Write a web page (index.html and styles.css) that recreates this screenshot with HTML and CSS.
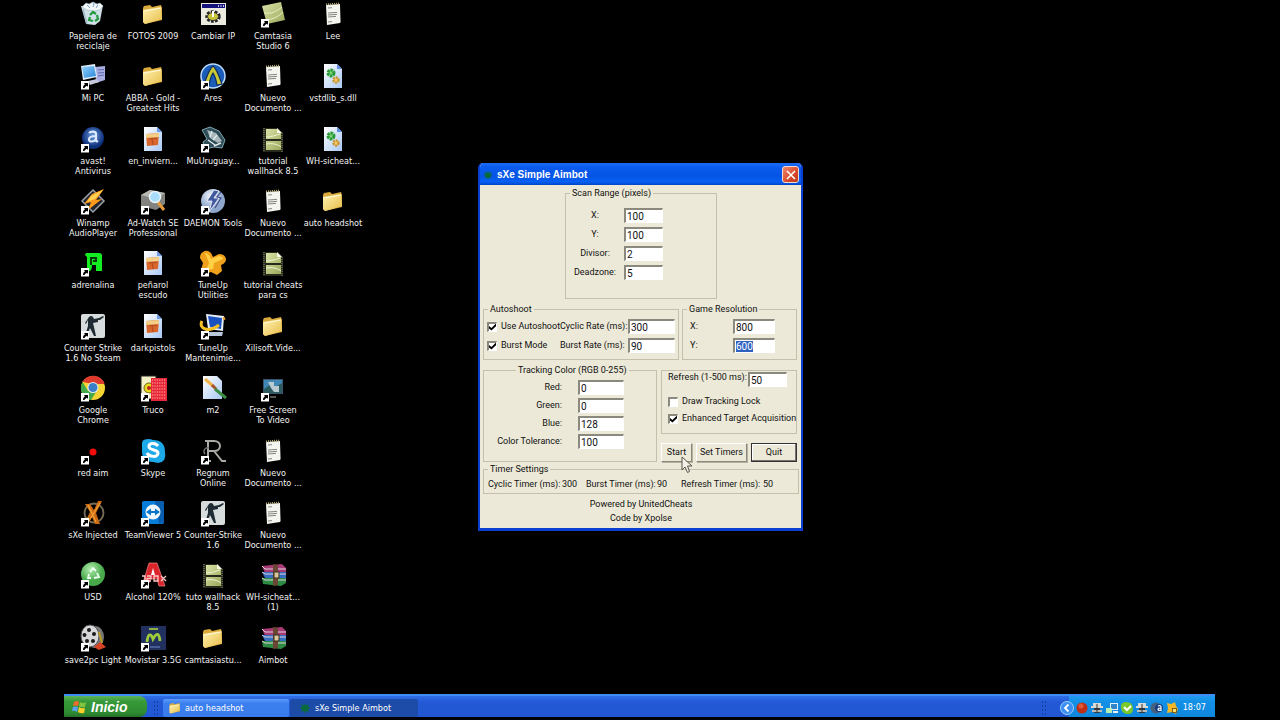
FILE: index.html
```
<!DOCTYPE html>
<html lang="es">
<head>
<meta charset="utf-8">
<title>Escritorio</title>
<link rel="stylesheet" href="styles.css">
</head>
<body>
<svg class="sprites" aria-hidden="true">
  <defs>
    <linearGradient id="g-folder" x1="0" y1="0" x2="1" y2="1"><stop offset="0" stop-color="#fff3b0"/><stop offset="1" stop-color="#e8bd4a"/></linearGradient>
    <linearGradient id="g-green" x1="0" y1="0" x2="1" y2="1"><stop offset="0" stop-color="#dbe3a8"/><stop offset="1" stop-color="#9aa75a"/></linearGradient>
    <linearGradient id="g-page" x1="0" y1="0" x2="1" y2="1"><stop offset="0" stop-color="#ffffff"/><stop offset="1" stop-color="#a9c8f5"/></linearGradient>
    <linearGradient id="g-screen" x1="0" y1="0" x2="1" y2="1"><stop offset="0" stop-color="#8fd3fb"/><stop offset="1" stop-color="#2a85d8"/></linearGradient>
    <radialGradient id="g-avast" cx=".5" cy=".4"><stop offset="0" stop-color="#6f9de0"/><stop offset="1" stop-color="#0c2e78"/></radialGradient>
    <radialGradient id="g-usd" cx=".4" cy=".3"><stop offset="0" stop-color="#b4edb0"/><stop offset="1" stop-color="#48a94a"/></radialGradient>
    <radialGradient id="g-disc" cx=".4" cy=".3"><stop offset="0" stop-color="#f4f8ff"/><stop offset="1" stop-color="#8ea6cc"/></radialGradient>
  </defs>
  <symbol id="arrow" viewBox="0 0 28 28"><rect x="2" y="19" width="8" height="8.500" fill="#fff"/><path d="M4 26c0-2 .6-3 2-3.600L5 21h4v4l-1-1.200C6.500 24.300 6 25 5.500 26z" fill="#000"/></symbol>
  <symbol id="bin" viewBox="0 0 28 28"><path d="M2 6l22-1-3 16-5 4-9-1z" fill="#cfe0e6"/><path d="M3 7l4-4 3 1 4-2 4 2 3-1 3 3-3 4-6 1-7-1z" fill="#f4fafa" stroke="#9fb6c4" stroke-width=".6"/><path d="M8 5l3 3M15 3l-1 4M19 5l-2 3" stroke="#7ba0d0" stroke-width="1"/><path d="M11 15l3-3 3 2M18 15l1 4-3 2M14 21l-4-1 1-3" fill="none" stroke="#1f9a3c" stroke-width="2.200"/><path d="M4 9l4 15" stroke="#8fb0c0"/></symbol>
  <symbol id="folder" viewBox="0 0 28 28"><path d="M4 8l1-2 6-1 2 2 9-2 1 3v12L6 24l-2-2z" fill="#d9a93c"/><path d="M4 10l18-3 1 12L6 24l-2-2z" fill="url(#g-folder)"/><path d="M5 11l17-3" stroke="#fffbd8"/></symbol>
  <symbol id="notes" viewBox="0 0 28 28"><path d="M7 5l14-1v19L8 25z" fill="#f5f5f0"/><path d="M21 5l1 17-1 1z" fill="#8b8b86"/><path d="M7 4.500L21 3.500" stroke="#b3a878" stroke-width="2" stroke-dasharray="1 1"/><path d="M9 8l4-.3M9 13l9-.6M9 15l9-.6M9 17l8-.6M9 22l4-.4" stroke="#777" stroke-width=".9"/></symbol>
  <symbol id="cog" viewBox="0 0 28 28"><rect x="2" y="3" width="25" height="22" fill="#ecebdf"/><rect x="3" y="4" width="23" height="4" fill="#14147c"/><path d="M19 6h1M21.500 6h1M24 6h1" stroke="#fff" stroke-width="1.500"/><ellipse cx="14" cy="16.500" rx="6" ry="4.500" fill="none" stroke="#222" stroke-width="3.500" stroke-dasharray="2.500 1.200"/><ellipse cx="14" cy="16.500" rx="5.500" ry="4" fill="#c9c53a" stroke="#333"/><path d="M14 11v6" stroke="#fff" stroke-width="2"/></symbol>
  <symbol id="cam" viewBox="0 0 28 28"><path d="M3 6l19-4 4 18-18 4z" fill="url(#g-green)"/><path d="M5 13c7 1 12-1 18-6M7 20c7-1 12-3 17-8" fill="none" stroke="#e9efc5"/></symbol>
  <symbol id="pc" viewBox="0 0 28 28"><path d="M16 5l10-1v14l-9 3z" fill="#a9aee0"/><path d="M19 8l6-.5M19 11l6-.5M19 14l6-1" stroke="#5f68b2"/><path d="M2 4l14-2 2 13-14 3z" fill="#e4eefb"/><path d="M3 5l12-1 2 10-12 2z" fill="url(#g-screen)"/><path d="M9 19l9-2 2 3-9 3z" fill="#c9c9de"/></symbol>
  <symbol id="ares" viewBox="0 0 28 28"><circle cx="14" cy="14" r="12" fill="#1b5cb8" stroke="#bcdcff" stroke-width="1.500"/><path d="M5 22C8 15 10 7 14 4c4 3 6 11 9 18l-5 1c-1-6-2-9-4-12-2 3-3 6-4 12z" fill="#c9c935" stroke="#112c5c" stroke-width="1.200"/></symbol>
  <symbol id="avast" viewBox="0 0 28 28"><circle cx="14" cy="13" r="11" fill="url(#g-avast)"/><path d="M10 8c2-2 7-2 7 1v6q0 2 2 1M17 11c-4 0-7 1-7 3.500s5 3 7-.5" fill="none" stroke="#dce9ff" stroke-width="2.200"/></symbol>
  <symbol id="pic" viewBox="0 0 28 28"><path d="M5 2h13l5 5v19H5z" fill="url(#g-page)"/><path d="M18 2v5h5z" fill="#6f9be6"/><path d="M7 9l13-1-1 12-11 1z" fill="#d9662b"/><path d="M7 9l13-1v4L7 13z" fill="#f2cf84"/><path d="M10 14l8-.5M13 13l1 7" stroke="#b34a22" stroke-width="1.200"/></symbol>
  <symbol id="mu" viewBox="0 0 28 28"><path d="M3 5l8-3 9 4 6 9-3 8-8-1-9 2-2-7 4-3z" fill="#2f4d57" stroke="#7ea5b1"/><path d="M8 5l9 3 6 8-4 2-8-5z" fill="#a9b7bb"/><path d="M9 15l7 5M13 6l-2 6M18 10l-4 5M22 18l-7 3" stroke="#dfeaec" stroke-width="1.400"/></symbol>
  <symbol id="film" viewBox="0 0 28 28"><path d="M4 3h15l5 5v19H4z" fill="#26291b"/><path d="M5 3v24M23 8v19" stroke="#8b916c" stroke-dasharray="1 1"/><path d="M7 4h11l4 4v6H7zM7 16h15v9H7z" fill="url(#g-green)"/><path d="M18 3v5h5z" fill="#f7f8ea"/><path d="M7 12c6 0 10-2 14-3M7 19c6-1 11 0 15 3" fill="none" stroke="#eef2ce"/></symbol>
  <symbol id="dll" viewBox="0 0 28 28"><path d="M5 2h13l5 5v19H5z" fill="url(#g-page)"/><path d="M18 2v5h5z" fill="#5f8fe0"/><circle cx="12" cy="11" r="3" fill="#7fd07b" stroke="#2a9a38" stroke-width="3" stroke-dasharray="2.500 .8"/><circle cx="17" cy="18" r="2.500" fill="#f6d06f" stroke="#c99432" stroke-width="2.500" stroke-dasharray="2 .8"/></symbol>
  <symbol id="winamp" viewBox="0 0 28 28"><path d="M14 3l11 11-11 11L3 14z" fill="#23262c" stroke="#9ba1ab" stroke-width="1.500"/><path d="M25 2l-12 5-8 10 7-2-3 8 14-11-6 1z" fill="#ff9a1a"/><path d="M24 3L12 9l-4 6 8-3z" fill="#ffd053"/></symbol>
  <symbol id="adwatch" viewBox="0 0 28 28"><path d="M2 8l9-5 15 3v11l-9 6-15-4z" fill="#82827e"/><path d="M2 8l9-5 15 3-9 6z" fill="#b8b8b2"/><path d="M18 14l7 9" stroke="#e29a3d" stroke-width="3"/><circle cx="16" cy="10" r="5.500" fill="#a8ddfa" stroke="#e8f3fa" stroke-width="1.500"/></symbol>
  <symbol id="daemon" viewBox="0 0 28 28"><circle cx="14" cy="14" r="12" fill="url(#g-disc)"/><path d="M15 3l-7 11h5l-3 11 10-14h-5l5-7z" fill="#415a9d" stroke="#f5f8ff" stroke-width=".8"/><path d="M22 5l-4 5 4 1-6 10" fill="none" stroke="#3a4c86" stroke-width="1.200"/></symbol>
  <symbol id="adren" viewBox="0 0 28 28"><path d="M6 6q0-2 2-2h12q3 0 3 3v15h-6v-6h-4q0 6-3 6H5q3-1 3-4V8z" fill="#12ee22"/><path d="M12 16V9h5v3h-3" fill="none" stroke="#043b09" stroke-width="2"/></symbol>
  <symbol id="tune" viewBox="0 0 28 28"><path d="M4 3q4-3 8 1l2 4 6-3q6 0 7 5 0 4-5 6l1 6-5 4-6-3-6 2-4-4 2-7-3-5q0-5 3-6z" fill="#f0a11c"/><path d="M6 4q4 0 6 6l8-3q4 1 4 3l-9 4-1 6-7 1 3-7z" fill="#ffd043"/></symbol>
  <symbol id="cs" viewBox="0 0 28 28"><rect x="2" y="2" width="24" height="24" rx="2" fill="#d7dcdc"/><path d="M10 5q2-2 4 0l1 2 5-1 4-2 1 1-4 3h-2v2l-5 1 1 4 2 9h-2l-4-8-3 8H6l3-10V8l-2 4-1-1z" fill="#202c33"/></symbol>
  <symbol id="maint" viewBox="0 0 28 28"><path d="M7 2l18 2-1 15-15-2z" fill="#e7eef8"/><path d="M9 4l14 2-1 11-11-2z" fill="#1951c0"/><path d="M10 20l14 0-1 4-14 0z" fill="#b9c7da"/><path d="M3 9c-4 8 7 12 17 4" fill="none" stroke="#f4c126" stroke-width="3"/><path d="M24 7l2-1" stroke="#f4a126" stroke-width="3"/></symbol>
  <symbol id="chrome" viewBox="0 0 28 28"><circle cx="14" cy="14" r="12" fill="#f5d534"/><path d="M3.600 8A12 12 0 0 1 25.500 10H14z" fill="#df3a2e"/><path d="M3.600 8A12 12 0 0 0 12 26l5-8-8-1z" fill="#43a94a"/><circle cx="14" cy="13.500" r="5.500" fill="#e9edf1"/><circle cx="14" cy="13.500" r="4.500" fill="#3b7fc9"/></symbol>
  <symbol id="truco" viewBox="0 0 28 28"><rect x="2" y="2" width="15" height="23" fill="#f2f0c4" stroke="#222"/><circle cx="10" cy="14" r="5" fill="#e7dc1c" stroke="#735f18"/><circle cx="10" cy="14" r="2" fill="#bf2222"/><rect x="12" y="4" width="16" height="23" fill="#e8283a"/><path d="M13 6h14M13 9h14M13 12h14M13 15h14M13 18h14M13 21h14M13 24h14" stroke="#ffb6a8" stroke-width="1.200" stroke-dasharray="1.200 1.200"/></symbol>
  <symbol id="m2" viewBox="0 0 28 28"><path d="M4 2h14l5 5v18H4z" fill="url(#g-page)"/><path d="M6 5l8 7" stroke="#f0b54c" stroke-width="3"/><path d="M13 11l4 4" stroke="#a3542b" stroke-width="3"/><path d="M16 15l11 9" stroke="#3c8c43" stroke-width="3"/></symbol>
  <symbol id="fsv" viewBox="0 0 28 28"><path d="M4 5h20v15H4z" fill="#3a556c"/><path d="M5 6h18v13H5z" fill="#4187b6"/><path d="M5 15l6-4 4 3 8-5v10H5z" fill="#2b5a5e"/><path d="M9 8h6v4h5v6h-5l-3-4z" fill="#b9cbd0"/><path d="M11 23h6" stroke="#555" stroke-width="2"/></symbol>
  <symbol id="dot" viewBox="0 0 28 28"><circle cx="14" cy="15" r="3.500" fill="#f20d0d"/></symbol>
  <symbol id="skype" viewBox="0 0 28 28"><path d="M3 8q-1-6 6-6 3 0 5 1 12 0 12 12 2 10-7 11l-5-1Q3 25 3 14z" fill="#1da8e8"/><path d="M19 9c-3-4-10-3-9 1 1 4 9 2 9 6 0 5-9 4-11 0" fill="none" stroke="#fff" stroke-width="3"/></symbol>
  <symbol id="regnum" viewBox="0 0 28 28"><path d="M9 4v20M6 24h6M6 4h9c8 0 8 10 0 10H9M15 14l8 10h4" fill="none" stroke="#a9a9a5" stroke-width="2"/><path d="M6 17c-3-4 1-7 4-6" fill="none" stroke="#777" stroke-width="1.300"/></symbol>
  <symbol id="sxe" viewBox="0 0 28 28"><circle cx="15" cy="14" r="9.500" fill="none" stroke="#766d59" stroke-width="1.800"/><path d="M6 5h5l4 6 4-9h4l-6 12 4 11h-5l-3-7-5 7H5l6-12z" fill="#c96a12"/><path d="M9 6l8 17M21 4l-11 18" stroke="#ef9f37" stroke-width="1.300"/></symbol>
  <symbol id="team" viewBox="0 0 28 28"><rect x="3" y="2" width="22" height="23" rx="2" fill="#087cda"/><path d="M16 2h7q2 0 2 2v19l-5 2z" fill="#075eae"/><circle cx="14" cy="13" r="7.500" fill="#eef7fd"/><path d="M7 13l5-3.500v2.500h4V9.500l5 3.500-5 3.500V14h-4v2.500z" fill="#0875ca"/></symbol>
  <symbol id="usd" viewBox="0 0 28 28"><circle cx="14" cy="13" r="12" fill="url(#g-usd)"/><path d="M11 11l3-4 3 3M18 12l2 4-5 1M12 17H9l1-4" fill="none" stroke="#edfff0" stroke-width="1.800"/></symbol>
  <symbol id="alcohol" viewBox="0 0 28 28"><path d="M10 2h8l8 23h-6l-2-7h-6l-4 7H3z" fill="#dc252a" stroke="#f18989" stroke-width=".7"/><path d="M14 7l2 7h-4z" fill="#fff"/><path d="M3 15h3v5M8 15h4v2.500H8V20h4M15 15h4v5h-4zM22 15l5 5M27 15l-5 5" fill="none" stroke="#ffcaca" stroke-width="1.300"/></symbol>
  <symbol id="rar" viewBox="0 0 28 28"><path d="M3 5l20-2 4 4v5H6z" fill="#a83a74"/><path d="M3 11h24v6H6z" fill="#356ec0"/><path d="M3 17h24v5l-5 3-18-2z" fill="#2c8a43"/><path d="M3 5l3 3h21M3 11l3 2h21M3 17l3 2h21" fill="none" stroke="#dfd3dc"/><path d="M14 3l5 1v20l-5 1z" fill="#6a4735"/><rect x="15" y="11" width="5" height="6" fill="#d8c89c" stroke="#3d2a1d"/></symbol>
  <symbol id="reel" viewBox="0 0 28 28"><ellipse cx="16" cy="13" rx="9" ry="11" fill="#77777a"/><ellipse cx="11" cy="12" rx="9" ry="11" fill="#d8d8da" stroke="#555"/><g fill="#1a1a1a"><circle cx="10" cy="6" r="2"/><circle cx="15" cy="10" r="2"/><circle cx="5.500" cy="11" r="2"/><circle cx="14" cy="17" r="2"/><circle cx="8" cy="17" r="2"/></g><path d="M20 8l3 11" stroke="#b99a27" stroke-width="2"/><path d="M15 23l6-5 6 5-7 3z" fill="#d94325"/></symbol>
  <symbol id="movi" viewBox="0 0 28 28"><rect x="2" y="2" width="25" height="24" fill="#22305f"/><path d="M10 5h9" stroke="#8fae49" stroke-width="2"/><path d="M8 18c1-9 4-9 6-3 4-7 6-6 7 2" fill="none" stroke="#9ccc3c" stroke-width="2.800"/><path d="M11 23h10" stroke="#6f86c9"/></symbol>
  <symbol id="spider" viewBox="0 0 12 12"><path d="M6 1l1 3 3-2-1 3 3 1-3 1 1 3-3-1-1 3-1-3-3 1 1-3-3-1 3-1-1-3 3 2z" fill="#0b6a3c"/><circle cx="6" cy="6" r="3" fill="#0b6a3c"/></symbol>
  <symbol id="flag" viewBox="0 0 16 16"><path d="M2 3q3-2 5 0L6 7Q4 6 1 7z" fill="#f06a2c"/><path d="M8 3q3 2 6 0l-1 5q-3 1-6-1z" fill="#83c340"/><path d="M1 8q3-1 5 0l-1 5q-2-2-5-1z" fill="#5aa2f2"/><path d="M7 8q3 2 6 1l-1 5q-3 1-6-1z" fill="#fbce2c"/></symbol>
  <symbol id="net" viewBox="0 0 14 14"><path d="M3 2h8v3H3zM1 5h12v2H1z" fill="#d9d9d5"/><path d="M4 7h6v5H4z" fill="#333a3f"/><path d="M2 10h10" stroke="#bcbcb4" stroke-width="2"/><path d="M7 3v8" stroke="#333"/></symbol>
</svg>

<main class="desktop">
  <ul class="icons">
    <li><a href="#"><svg><use href="#bin"/></svg><span>Papelera de<br>reciclaje</span></a></li>
    <li><a href="#"><svg><use href="#pc"/><use href="#arrow"/></svg><span>Mi PC</span></a></li>
    <li><a href="#"><svg><use href="#avast"/><use href="#arrow"/></svg><span>avast!<br>Antivirus</span></a></li>
    <li><a href="#"><svg><use href="#winamp"/><use href="#arrow"/></svg><span>Winamp<br>AudioPlayer</span></a></li>
    <li><a href="#"><svg><use href="#adren"/><use href="#arrow"/></svg><span>adrenalina</span></a></li>
    <li><a href="#"><svg><use href="#cs"/><use href="#arrow"/></svg><span>Counter Strike<br>1.6 No Steam</span></a></li>
    <li><a href="#"><svg><use href="#chrome"/><use href="#arrow"/></svg><span>Google<br>Chrome</span></a></li>
    <li><a href="#"><svg><use href="#dot"/><use href="#arrow"/></svg><span>red aim</span></a></li>
    <li><a href="#"><svg><use href="#sxe"/><use href="#arrow"/></svg><span>sXe Injected</span></a></li>
    <li><a href="#"><svg><use href="#usd"/><use href="#arrow"/></svg><span>USD</span></a></li>
    <li><a href="#"><svg><use href="#reel"/><use href="#arrow"/></svg><span>save2pc Light</span></a></li>

    <li><a href="#"><svg><use href="#folder"/></svg><span>FOTOS 2009</span></a></li>
    <li><a href="#"><svg><use href="#folder"/></svg><span>ABBA - Gold -<br>Greatest Hits</span></a></li>
    <li><a href="#"><svg><use href="#pic"/></svg><span>en_inviern...</span></a></li>
    <li><a href="#"><svg><use href="#adwatch"/><use href="#arrow"/></svg><span>Ad-Watch SE<br>Professional</span></a></li>
    <li><a href="#"><svg><use href="#pic"/></svg><span>peñarol<br>escudo</span></a></li>
    <li><a href="#"><svg><use href="#pic"/></svg><span>darkpistols</span></a></li>
    <li><a href="#"><svg><use href="#truco"/><use href="#arrow"/></svg><span>Truco</span></a></li>
    <li><a href="#"><svg><use href="#skype"/><use href="#arrow"/></svg><span>Skype</span></a></li>
    <li><a href="#"><svg><use href="#team"/><use href="#arrow"/></svg><span>TeamViewer 5</span></a></li>
    <li><a href="#"><svg><use href="#alcohol"/><use href="#arrow"/></svg><span>Alcohol 120%</span></a></li>
    <li><a href="#"><svg><use href="#movi"/><use href="#arrow"/></svg><span>Movistar 3.5G</span></a></li>

    <li><a href="#"><svg><use href="#cog"/></svg><span>Cambiar IP</span></a></li>
    <li><a href="#"><svg><use href="#ares"/><use href="#arrow"/></svg><span>Ares</span></a></li>
    <li><a href="#"><svg><use href="#mu"/><use href="#arrow"/></svg><span>MuUruguay...</span></a></li>
    <li><a href="#"><svg><use href="#daemon"/><use href="#arrow"/></svg><span>DAEMON Tools</span></a></li>
    <li><a href="#"><svg><use href="#tune"/><use href="#arrow"/></svg><span>TuneUp<br>Utilities</span></a></li>
    <li><a href="#"><svg><use href="#maint"/><use href="#arrow"/></svg><span>TuneUp<br>Mantenimie...</span></a></li>
    <li><a href="#"><svg><use href="#m2"/></svg><span>m2</span></a></li>
    <li><a href="#"><svg><use href="#regnum"/><use href="#arrow"/></svg><span>Regnum<br>Online</span></a></li>
    <li><a href="#"><svg><use href="#cs"/><use href="#arrow"/></svg><span>Counter-Strike<br>1.6</span></a></li>
    <li><a href="#"><svg><use href="#film"/></svg><span>tuto wallhack<br>8.5</span></a></li>
    <li><a href="#"><svg><use href="#folder"/></svg><span>camtasiastu...</span></a></li>

    <li><a href="#"><svg><use href="#cam"/><use href="#arrow"/></svg><span>Camtasia<br>Studio 6</span></a></li>
    <li><a href="#"><svg><use href="#notes"/></svg><span>Nuevo<br>Documento ...</span></a></li>
    <li><a href="#"><svg><use href="#film"/></svg><span>tutorial<br>wallhack 8.5</span></a></li>
    <li><a href="#"><svg><use href="#notes"/></svg><span>Nuevo<br>Documento ...</span></a></li>
    <li><a href="#"><svg><use href="#film"/></svg><span>tutorial cheats<br>para cs</span></a></li>
    <li><a href="#"><svg><use href="#folder"/></svg><span>Xilisoft.Vide...</span></a></li>
    <li><a href="#"><svg><use href="#fsv"/><use href="#arrow"/></svg><span>Free Screen<br>To Video</span></a></li>
    <li><a href="#"><svg><use href="#notes"/></svg><span>Nuevo<br>Documento ...</span></a></li>
    <li><a href="#"><svg><use href="#notes"/></svg><span>Nuevo<br>Documento ...</span></a></li>
    <li><a href="#"><svg><use href="#rar"/></svg><span>WH-sicheat...<br>(1)</span></a></li>
    <li><a href="#"><svg><use href="#rar"/></svg><span>Aimbot</span></a></li>

    <li><a href="#"><svg><use href="#notes"/></svg><span>Lee</span></a></li>
    <li><a href="#"><svg><use href="#dll"/></svg><span>vstdlib_s.dll</span></a></li>
    <li><a href="#"><svg><use href="#dll"/></svg><span>WH-sicheat...</span></a></li>
    <li><a href="#"><svg><use href="#folder"/></svg><span>auto headshot</span></a></li>
  </ul>

  <section class="window" aria-label="sXe Simple Aimbot">
    <header class="titlebar">
      <svg class="app-icon"><use href="#spider"/></svg>
      <h1>sXe Simple Aimbot</h1>
      <button class="close" type="button" aria-label="Cerrar"><svg viewBox="0 0 10 10"><path d="M1 1l8 8M9 1L1 9" stroke="#fff" stroke-width="1.600"/></svg></button>
    </header>
    <form class="form">
      <fieldset class="scan">
        <legend>Scan Range (pixels)</legend>
        <div class="scan-grid">
          <label for="sx">X:</label><input id="sx" type="text" value="100">
          <label for="sy">Y:</label><input id="sy" type="text" value="100">
          <label for="sd">Divisor:</label><input id="sd" type="text" value="2">
          <label for="sz">Deadzone:</label><input id="sz" type="text" value="5">
        </div>
      </fieldset>

      <div class="row shoot-row">
        <fieldset>
          <legend>Autoshoot</legend>
          <div class="shoot-grid">
            <label class="check"><input type="checkbox" checked>Use Autoshoot</label>
            <label for="cr">Cyclic Rate (ms):</label><input id="cr" type="text" value="300">
            <label class="check"><input type="checkbox" checked>Burst Mode</label>
            <label for="br">Burst Rate (ms):</label><input id="br" type="text" value="90">
          </div>
        </fieldset>
        <fieldset>
          <legend>Game Resolution</legend>
          <div class="res-grid">
            <label for="rx">X:</label><input id="rx" type="text" value="800">
            <label for="ry">Y:</label><input id="ry" type="text" value="600" autofocus>
          </div>
        </fieldset>
      </div>

      <div class="row track-row">
        <fieldset class="tracking">
          <legend>Tracking Color (RGB 0-255)</legend>
          <div class="color-grid">
            <label for="c1">Red:</label><input id="c1" type="text" value="0">
            <label for="c2">Green:</label><input id="c2" type="text" value="0">
            <label for="c3">Blue:</label><input id="c3" type="text" value="128">
            <label for="c4">Color Tolerance:</label><input id="c4" type="text" value="100">
          </div>
        </fieldset>
        <div class="side">
          <fieldset class="options">
            <div class="refresh"><label for="rf">Refresh (1-500 ms):</label><input id="rf" type="text" value="50"></div>
            <label class="check"><input type="checkbox">Draw Tracking Lock</label>
            <label class="check"><input type="checkbox" checked>Enhanced Target Acquisition</label>
          </fieldset>
          <div class="buttons">
            <button type="button">Start</button>
            <button type="button">Set Timers</button>
            <button type="button" class="default">Quit</button>
          </div>
        </div>
      </div>

      <fieldset class="timers">
        <legend>Timer Settings</legend>
        <div class="timer-grid">
          <span>Cyclic Timer (ms):</span><output>300</output>
          <span>Burst Timer (ms):</span><output>90</output>
          <span>Refresh Timer (ms):</span><output>50</output>
        </div>
      </fieldset>
      <footer class="credits">
        <p>Powered by UnitedCheats</p>
        <p>Code by Xpolse</p>
      </footer>
    </form>
  </section>
</main>

<nav class="taskbar">
  <button class="start" type="button"><svg><use href="#flag"/></svg>Inicio</button>
  <span class="grip"></span>
  <button class="task" type="button"><svg viewBox="3 3 22 22"><use href="#folder" width="28" height="28"/></svg>auto headshot</button>
  <button class="task active" type="button"><svg><use href="#spider"/></svg>sXe Simple Aimbot</button>
  <span class="space"></span>
  <span class="grip"></span>
  <div class="tray">
    <button class="expand" type="button" aria-label="Mostrar iconos ocultos"><svg viewBox="0 0 14 14"><circle cx="7" cy="7" r="6.500" fill="#3b8ff0" stroke="#9fd2ff"/><path d="M8.500 3.500L5 7l3.500 3.500" fill="none" stroke="#fff" stroke-width="1.800"/></svg></button>
    <svg viewBox="0 0 14 14"><circle cx="7" cy="7" r="5.500" fill="#c02f14"/><circle cx="6" cy="5" r="2.500" fill="#dc5a35"/></svg>
    <svg><use href="#net"/></svg>
    <svg viewBox="0 0 14 14"><path d="M5 2h8v7H5z" fill="#e3f0fa"/><path d="M6 3h6v5H6z" fill="#2f86c9"/><path d="M1 7h6v5H1z" fill="#b7edb2"/><path d="M8 11h5" stroke="#eee" stroke-width="2"/></svg>
    <svg viewBox="0 0 14 14"><path d="M1 4q1-3 5-3 7 0 7 7 0 5-5 5-6 0-7-6z" fill="#78c82c"/><path d="M4 6l3 3 4-4" fill="none" stroke="#fff" stroke-width="2"/></svg>
    <svg><use href="#net"/></svg>
    <svg viewBox="0 0 14 14"><circle cx="6" cy="7" r="5.500" fill="#47617f"/><circle cx="9" cy="7" r="4" fill="#153d80"/><path d="M8 5q3-1 3 1v4M11 7q-3 0-3 1.500T11 9" fill="none" stroke="#fff" stroke-width="1.200"/></svg>
    <svg viewBox="0 0 14 14"><path d="M2 2l4 1 4-2 1 4 2 3-2 5-4-2-5 1 1-5z" fill="#f1b727"/><path d="M7 7h5v5H7z" fill="#7d5a1d"/><path d="M8 8h3v3H8z" fill="#ffe060"/></svg>
    <time>18:07</time>
  </div>
</nav>

<svg class="pointer" viewBox="0 0 12 18" aria-hidden="true"><path d="M1 1v13l3-3 2.500 5.500 2-1L6.500 10H11z" fill="#f4f2e8" stroke="#55534a"/></svg>
<script src="app.js"></script>
</body>
</html>
```
FILE: app.js
```
// The vertical resolution opens with its value selected, ready to be typed over.
const field = document.getElementById('ry');
field.focus();
field.select();
```
FILE: styles.css
```
* { box-sizing: border-box; }

body {
  margin: 0;
  height: 100vh;
  display: flex;
  flex-direction: column;
  background: #000;
  color: #fff;
  font: 9px/11px "DejaVu Sans Condensed", "DejaVu Sans", sans-serif;
  overflow: hidden;
}

button, input { font: inherit; color: inherit; }
button { padding: 0; border: 0; background: none; white-space: nowrap; }
h1, p, ul, fieldset, legend { margin: 0; padding: 0; }

/* Kept rendered, at no size, so that its gradients stay usable */
.sprites { position: absolute; width: 0; height: 0; }

/* Desktop icons */
.desktop {
  flex: 1;
  min-height: 0;
  padding: 0 0 8px 63px;
}

.icons {
  height: 100%;
  display: grid;
  grid-auto-flow: column;
  grid-template-rows: repeat(11, minmax(0, 1fr));
  grid-auto-columns: 60px;
  list-style: none;
}

.icons a {
  display: flex;
  flex-direction: column;
  align-items: center;
  gap: 3px;
  color: #f2f2f2;
  line-height: 10px;
  text-align: center;
  text-decoration: none;
  white-space: nowrap;
}

.icons svg { width: 28px; height: 28px; }

/* Program window */
.window {
  position: absolute;
  left: 478px;
  top: 163px;
  width: 325px;
  border: solid #0a3fd0;
  border-width: 0 2px 3px;
  border-radius: 5px 5px 0 0;
  background: #ece9d8;
  color: #111;
  font-family: Roboto, "Liberation Sans", sans-serif;
  overflow: hidden;
}

.titlebar {
  display: flex;
  align-items: center;
  gap: 4px;
  height: 22px;
  padding: 1px 2px 0 3px;
  background: linear-gradient(#1b6cf5, #0a5bee 20%, #0554e4 60%, #0660f6 85%, #0344c4);
  color: #fff;
}

.titlebar h1 {
  flex: 1;
  font: bold 10px/14px "Liberation Sans", sans-serif;
}

.app-icon { width: 10px; height: 10px; }

.close {
  display: grid;
  place-items: center;
  width: 17px;
  height: 17px;
  border: 1px solid #f3d9d0;
  border-radius: 3px;
  background: linear-gradient(135deg, #ee8a6c, #d8492a 60%, #b93a1c);
}

.close svg { width: 10px; height: 10px; }

.form { padding: 3px 2px 4px 3px; }

fieldset {
  min-width: 0;
  border: 1px solid #c3c0ae;
}

legend { margin-left: 4px; padding: 0 2px; }

.form label, .form span, .form output { white-space: nowrap; }

.form input[type="text"] {
  width: 100%;
  height: 15px;
  margin: 0;
  padding: 0 1px;
  border: solid;
  border-width: 2px 1px 1px 2px;
  border-color: #8b897e #fff #fff #8b897e;
  border-radius: 0;
  background: #fff;
  font-size: 10px;
  outline: 0;
}

.form input[type="text"]::selection { background: #2f62c0; color: #fff; }

.check {
  display: flex;
  align-items: center;
  gap: 4px;
}

.check input {
  appearance: none;
  flex: none;
  width: 10px;
  height: 10px;
  margin: 0;
  border: solid;
  border-width: 2px 1px 1px 2px;
  border-color: #8b897e #fff #fff #8b897e;
  background: #fff;
}

.check input:checked::before {
  content: "";
  display: block;
  width: 7px;
  height: 7px;
  background: #000;
  clip-path: polygon(0 35%, 35% 65%, 100% 0, 100% 40%, 35% 100%, 0 70%);
}

.scan {
  width: 152px;
  margin-left: 82px;
  padding-bottom: 18px;
}

.scan-grid {
  display: grid;
  grid-template-columns: 50px 39px;
  gap: 4px;
  padding: 9px 0 0 4px;
  align-items: center;
  text-align: center;
}

.row { display: flex; gap: 3px; margin-top: 5px; }
.shoot-row fieldset { width: 196px; padding-bottom: 6px; }
.shoot-row fieldset + fieldset { width: 115px; }

.shoot-grid {
  display: grid;
  grid-template-columns: 73px 68px 47px;
  row-gap: 4px;
  padding: 4px 0 0 3px;
  align-items: center;
}

.res-grid {
  display: grid;
  grid-template-columns: 43px 42px;
  row-gap: 4px;
  padding: 4px 0 0 7px;
  align-items: center;
}

.track-row { gap: 4px; }
.tracking { width: 174px; }
.tracking legend { margin-left: 32px; }

.color-grid {
  display: grid;
  grid-template-columns: 78px 46px;
  gap: 3px 16px;
  padding: 4px 0 12px;
  align-items: center;
  text-align: right;
}

.side { width: 136px; padding-top: 5px; }

.options {
  display: flex;
  flex-direction: column;
  gap: 6px;
  padding: 1px 0 9px 6px;
}

.refresh {
  display: grid;
  grid-template-columns: 80px 39px;
  margin-bottom: 3px;
}

.buttons {
  display: grid;
  grid-template-columns: 31px 51px 1fr;
  gap: 4px;
  margin-top: 9px;
}

.buttons button {
  height: 19px;
  border: solid;
  border-width: 1px;
  border-color: #fff #8b897e #8b897e #fff;
  box-shadow: 1px 1px #b5b2a2;
}

.buttons .default { border-color: #333; box-shadow: inset -1px -1px #77756b, inset 1px 1px #fff; }

.timers { margin-top: 2px; }

.timer-grid {
  display: grid;
  grid-template-columns: 74px 24px 71px 24px 82px auto;
  padding: 4px 0 3px 4px;
}

.credits {
  padding-top: 5px;
  text-align: center;
}

.credits p + p { margin-top: 3px; }

/* Taskbar */
.taskbar {
  display: flex;
  align-items: stretch;
  height: 23px;
  margin: 0 65px 3px 64px;
  border-top: 2px solid #3f8cf3;
  background: linear-gradient(#2f6ee8, #2459d6 30%, #2157d3);
}

.start {
  display: flex;
  align-items: center;
  gap: 3px;
  width: 83px;
  padding-left: 8px;
  border-radius: 0 8px 8px 0;
  background: linear-gradient(#5cb55c, #379a39 25%, #2f8b32 80%, #246f28);
  font: italic bold 14px/20px "Liberation Sans", sans-serif;
}

.start svg { width: 16px; height: 16px; }

.grip {
  width: 5px;
  margin: 4px 5px 2px 6px;
  background: radial-gradient(#163f9d 1px, transparent 1px) 0 0 / 3px 4px;
}

.task {
  display: flex;
  align-items: center;
  gap: 4px;
  width: 126px;
  margin-top: 3px;
  padding-left: 6px;
  border-radius: 2px;
  background: linear-gradient(#5a9bf8, #3b7ff0 25%, #3a7bea);
}

.task svg { width: 12px; height: 12px; }
.task.active { width: 128px; margin-left: 1px; padding-left: 9px; background: #1c4ba8; }

.space { flex: 1; }

.tray {
  display: flex;
  align-items: center;
  gap: 1px;
  margin-left: 18px;
  padding: 2px 9px 0 0;
  background: linear-gradient(#1f9bf0, #1290e6 30%, #0f86dc);
}

.tray svg { flex: none; display: block; width: 14px; height: 14px; }
.expand { margin-left: -9px; }
.tray time { margin-left: 3px; }

.pointer {
  position: absolute;
  left: 681px;
  top: 456px;
  width: 12px;
  height: 18px;
}
```
